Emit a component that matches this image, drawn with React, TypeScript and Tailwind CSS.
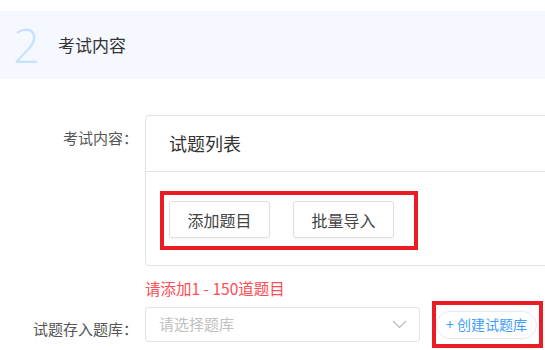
import React from 'react';

const App = () => {
  return (
    <div
      className="w-[545px] h-[350px] overflow-hidden bg-white text-[#333]"
      style={{ fontFamily: '"Noto Sans CJK SC", "Noto Sans", sans-serif' }}
    >
      {/* Step header */}
      <div className="mt-[11px] h-[68px] bg-[#f5f9ff] flex items-center pl-[13px]">
        <span
          className="text-[47px] leading-none font-light text-[#c6e2ff] w-[45px]"
          style={{ fontFamily: '"Open Sans", sans-serif' }}
        >
          2
        </span>
        <span className="text-[17px] text-[#333]">考试内容</span>
      </div>

      {/* Exam content row */}
      <div className="flex mt-[36px]">
        <div className="w-[145px] shrink-0 text-right pr-[7px] pt-[13px] text-[15px] leading-[20px] text-[#555]">
          考试内容：
        </div>
        <div className="w-[480px] shrink-0 border border-[#e2e2e2] rounded-[4px]">
          <div className="h-[56px] border-b border-[#e2e2e2] flex items-center pl-[23px] text-[18px] text-[#333]">
            试题列表
          </div>
          <div className="pl-[23px] pt-[29px] pb-[27px]">
            <div className="relative inline-flex gap-[23px]">
              <button className="h-[37px] w-[101px] border border-[#e0e0e0] rounded-[3px] bg-white text-[16px] text-[#444] shadow-[0_1px_2px_rgba(0,0,0,0.06)]">
                添加题目
              </button>
              <button className="h-[37px] w-[101px] border border-[#e0e0e0] rounded-[3px] bg-white text-[16px] text-[#444] shadow-[0_1px_2px_rgba(0,0,0,0.06)]">
                批量导入
              </button>
              <div className="absolute -left-[9px] -top-[10px] -right-[24px] -bottom-[12px] border-4 border-[#ec1c24] pointer-events-none" />
            </div>
          </div>
        </div>
      </div>

      {/* Hint */}
      <div className="pl-[145px] mt-[12px] text-[15.5px] leading-[21px] text-[#ff4d55]">
        请添加1 - 150道题目
      </div>

      {/* Question bank row */}
      <div className="flex items-center mt-[8px]">
        <div className="w-[145px] shrink-0 text-right pr-[7px] pt-[9px] text-[15px] leading-[20px] text-[#555]">
          试题存入题库：
        </div>
        <div className="w-[275px] h-[35px] shrink-0 border border-[#e2e2e2] rounded-[3px] flex items-center justify-between pl-[13px] pr-[12px]">
          <span className="text-[15px] text-[#c0c0c0]">请选择题库</span>
          <svg width="15" height="9" viewBox="0 0 15 9" fill="none">
            <path d="M1 1l6.5 6.5L14 1" stroke="#b8b8b8" strokeWidth="1.1" />
          </svg>
        </div>
        <div className="relative ml-[16px]">
          <button className="h-[28px] px-[9px] rounded-full border border-[#e6e9ef] bg-white text-[14px] text-[#409eff] whitespace-nowrap">
            + 创建试题库
          </button>
          <div className="absolute -left-[4px] -top-[10px] -right-[6px] -bottom-[9px] border-4 border-[#ec1c24] pointer-events-none" />
        </div>
      </div>
    </div>
  );
};

export default App;
